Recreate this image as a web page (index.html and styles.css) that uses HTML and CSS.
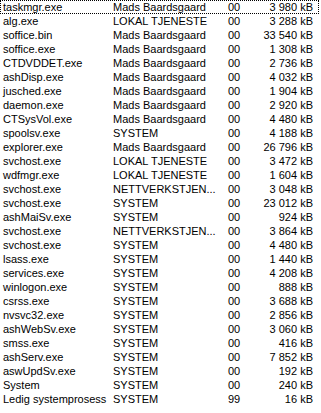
FILE: index.html
```html
<!DOCTYPE html>
<html lang="no">
<head>
<meta charset="utf-8">
<title>Prosesser</title>
<link rel="stylesheet" href="styles.css">
</head>
<body>
<div class="list">
  <div class="row focus"><span class="c name">taskmgr.exe</span><span class="c user">Mads Baardsgaard</span><span class="c cpu">00</span><span class="c mem">3 980 kB</span></div>
  <div class="row"><span class="c name">alg.exe</span><span class="c user">LOKAL TJENESTE</span><span class="c cpu">00</span><span class="c mem">3 288 kB</span></div>
  <div class="row"><span class="c name">soffice.bin</span><span class="c user">Mads Baardsgaard</span><span class="c cpu">00</span><span class="c mem">33 540 kB</span></div>
  <div class="row"><span class="c name">soffice.exe</span><span class="c user">Mads Baardsgaard</span><span class="c cpu">00</span><span class="c mem">1 308 kB</span></div>
  <div class="row"><span class="c name">CTDVDDET.exe</span><span class="c user">Mads Baardsgaard</span><span class="c cpu">00</span><span class="c mem">2 736 kB</span></div>
  <div class="row"><span class="c name">ashDisp.exe</span><span class="c user">Mads Baardsgaard</span><span class="c cpu">00</span><span class="c mem">4 032 kB</span></div>
  <div class="row"><span class="c name">jusched.exe</span><span class="c user">Mads Baardsgaard</span><span class="c cpu">00</span><span class="c mem">1 904 kB</span></div>
  <div class="row"><span class="c name">daemon.exe</span><span class="c user">Mads Baardsgaard</span><span class="c cpu">00</span><span class="c mem">2 920 kB</span></div>
  <div class="row"><span class="c name">CTSysVol.exe</span><span class="c user">Mads Baardsgaard</span><span class="c cpu">00</span><span class="c mem">4 480 kB</span></div>
  <div class="row"><span class="c name">spoolsv.exe</span><span class="c user">SYSTEM</span><span class="c cpu">00</span><span class="c mem">4 188 kB</span></div>
  <div class="row"><span class="c name">explorer.exe</span><span class="c user">Mads Baardsgaard</span><span class="c cpu">00</span><span class="c mem">26 796 kB</span></div>
  <div class="row"><span class="c name">svchost.exe</span><span class="c user">LOKAL TJENESTE</span><span class="c cpu">00</span><span class="c mem">3 472 kB</span></div>
  <div class="row"><span class="c name">wdfmgr.exe</span><span class="c user">LOKAL TJENESTE</span><span class="c cpu">00</span><span class="c mem">1 604 kB</span></div>
  <div class="row"><span class="c name">svchost.exe</span><span class="c user">NETTVERKSTJEN...</span><span class="c cpu">00</span><span class="c mem">3 048 kB</span></div>
  <div class="row"><span class="c name">svchost.exe</span><span class="c user">SYSTEM</span><span class="c cpu">00</span><span class="c mem">23 012 kB</span></div>
  <div class="row"><span class="c name">ashMaiSv.exe</span><span class="c user">SYSTEM</span><span class="c cpu">00</span><span class="c mem">924 kB</span></div>
  <div class="row"><span class="c name">svchost.exe</span><span class="c user">NETTVERKSTJEN...</span><span class="c cpu">00</span><span class="c mem">3 864 kB</span></div>
  <div class="row"><span class="c name">svchost.exe</span><span class="c user">SYSTEM</span><span class="c cpu">00</span><span class="c mem">4 480 kB</span></div>
  <div class="row"><span class="c name">lsass.exe</span><span class="c user">SYSTEM</span><span class="c cpu">00</span><span class="c mem">1 440 kB</span></div>
  <div class="row"><span class="c name">services.exe</span><span class="c user">SYSTEM</span><span class="c cpu">00</span><span class="c mem">4 208 kB</span></div>
  <div class="row"><span class="c name">winlogon.exe</span><span class="c user">SYSTEM</span><span class="c cpu">00</span><span class="c mem">888 kB</span></div>
  <div class="row"><span class="c name">csrss.exe</span><span class="c user">SYSTEM</span><span class="c cpu">00</span><span class="c mem">3 688 kB</span></div>
  <div class="row"><span class="c name">nvsvc32.exe</span><span class="c user">SYSTEM</span><span class="c cpu">00</span><span class="c mem">2 856 kB</span></div>
  <div class="row"><span class="c name">ashWebSv.exe</span><span class="c user">SYSTEM</span><span class="c cpu">00</span><span class="c mem">3 060 kB</span></div>
  <div class="row"><span class="c name">smss.exe</span><span class="c user">SYSTEM</span><span class="c cpu">00</span><span class="c mem">416 kB</span></div>
  <div class="row"><span class="c name">ashServ.exe</span><span class="c user">SYSTEM</span><span class="c cpu">00</span><span class="c mem">7 852 kB</span></div>
  <div class="row"><span class="c name">aswUpdSv.exe</span><span class="c user">SYSTEM</span><span class="c cpu">00</span><span class="c mem">192 kB</span></div>
  <div class="row"><span class="c name">System</span><span class="c user">SYSTEM</span><span class="c cpu">00</span><span class="c mem">240 kB</span></div>
  <div class="row"><span class="c name">Ledig systemprosess</span><span class="c user">SYSTEM</span><span class="c cpu">99</span><span class="c mem">16 kB</span></div>
</div>
</body>
</html>
```
FILE: styles.css
```css
html, body {
  margin: 0;
  padding: 0;
  background: #ffffff;
}
body {
  font-family: "Liberation Sans", Arial, sans-serif;
  font-size: 11px;
  color: #000000;
  overflow: hidden;
}
.list {
  display: flex;
  flex-direction: column;
  width: 319px;
}
.row {
  display: grid;
  grid-template-columns: 107px 115px 36px 61px;
  height: 14px;
  line-height: 14px;
  box-sizing: border-box;
}
.row.focus {
  outline: 1px dotted #000000;
  outline-offset: -1px;
}
.c {
  white-space: nowrap;
  overflow: hidden;
}
.name {
  padding-left: 3px;
}
.user,
.cpu {
  padding-left: 6px;
}
.mem {
  text-align: right;
  padding-right: 6px;
}
```
